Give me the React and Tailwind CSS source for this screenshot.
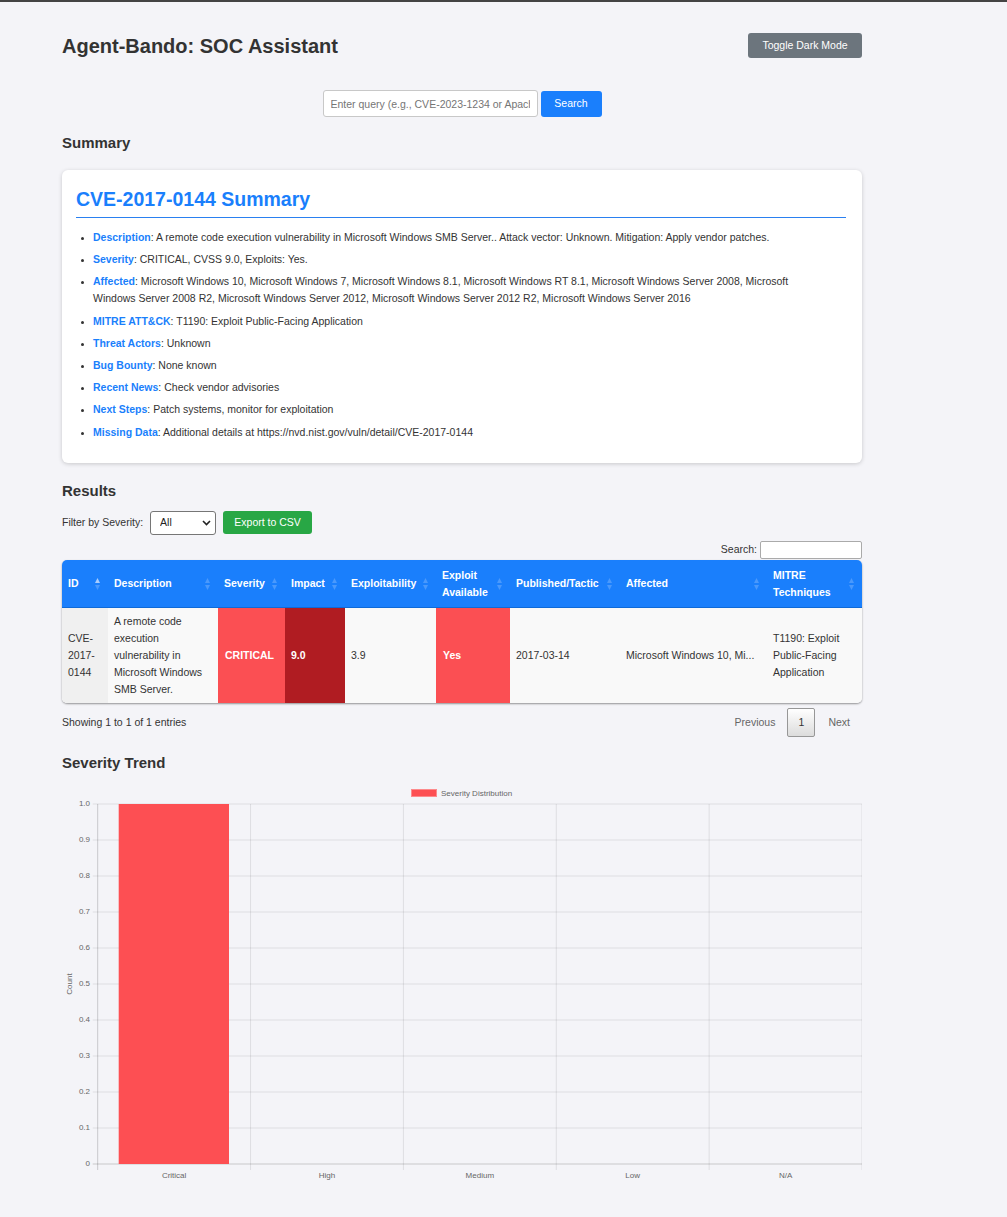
import React, { useState } from 'react';

const summaryItems = [
  { label: 'Description', text: 'A remote code execution vulnerability in Microsoft Windows SMB Server.. Attack vector: Unknown. Mitigation: Apply vendor patches.' },
  { label: 'Severity', text: 'CRITICAL, CVSS 9.0, Exploits: Yes.' },
  { label: 'Affected', text: 'Microsoft Windows 10, Microsoft Windows 7, Microsoft Windows 8.1, Microsoft Windows RT 8.1, Microsoft Windows Server 2008, Microsoft Windows Server 2008 R2, Microsoft Windows Server 2012, Microsoft Windows Server 2012 R2, Microsoft Windows Server 2016' },
  { label: 'MITRE ATT&CK', text: 'T1190: Exploit Public-Facing Application' },
  { label: 'Threat Actors', text: 'Unknown' },
  { label: 'Bug Bounty', text: 'None known' },
  { label: 'Recent News', text: 'Check vendor advisories' },
  { label: 'Next Steps', text: 'Patch systems, monitor for exploitation' },
  { label: 'Missing Data', text: 'Additional details at https://nvd.nist.gov/vuln/detail/CVE-2017-0144' },
];

const columns = [
  { title: 'ID', width: 46, active: true },
  { title: 'Description', width: 110 },
  { title: 'Severity', width: 67 },
  { title: 'Impact', width: 60 },
  { title: 'Exploitability', width: 91 },
  { title: 'Exploit Available', width: 74 },
  { title: 'Published/Tactic', width: 110 },
  { title: 'Affected', width: 147 },
  { title: 'MITRE Techniques', width: 95 },
];

const SortIcon = ({ active }) => (
  <svg width="5" height="12" viewBox="0 0 5 12" className="shrink-0">
    <path d="M2.5 0L5 5H0Z" fill={active ? '#a9cdfd' : '#4a99fc'} />
    <path d="M0 7H5L2.5 12Z" fill="#4a99fc" />
  </svg>
);

// Bar chart of severity counts
const SeverityChart = () => {
  const plotL = 35.7;
  const plotR = 800;
  const plotT = 32;
  const plotB = 392;
  const cats = ['Critical', 'High', 'Medium', 'Low', 'N/A'];
  const values = [1, 0, 0, 0, 0];
  const catW = (plotR - plotL) / cats.length;
  const ticks = [1.0, 0.9, 0.8, 0.7, 0.6, 0.5, 0.4, 0.3, 0.2, 0.1, 0];

  return (
    <svg width="800" height="425" className="block">
      {/* legend */}
      <rect x="349.5" y="17.5" width="25" height="7" fill="#fd4f53" stroke="#fd8a8c" strokeWidth="1" />
      <text x="379" y="21.5" fontSize="8" fill="#666" dominantBaseline="middle">
        Severity Distribution
      </text>

      {/* horizontal grid */}
      {ticks.map((t, i) => {
        const y = plotT + ((plotB - plotT) / 10) * i;
        const isAxis = i === ticks.length - 1;
        return (
          <g key={t}>
            <line
              x1={plotL - 5}
              x2={plotR}
              y1={y}
              y2={y}
              stroke={isAxis ? 'rgba(0,0,0,0.18)' : 'rgba(0,0,0,0.09)'}
              strokeWidth="1"
            />
            <text x="28" y={y} fontSize="8" fill="#666" textAnchor="end" dominantBaseline="middle">
              {t === 0 ? '0' : t.toFixed(1)}
            </text>
          </g>
        );
      })}

      {/* vertical grid */}
      {[0, 1, 2, 3, 4, 5].map((k) => {
        const x = plotL + catW * k;
        return (
          <line
            key={k}
            x1={x}
            x2={x}
            y1={plotT}
            y2={plotB + 6}
            stroke={k === 0 ? 'rgba(0,0,0,0.18)' : 'rgba(0,0,0,0.09)'}
            strokeWidth="1"
          />
        );
      })}

      {/* bars */}
      {values.map((v, i) =>
        v > 0 ? (
          <rect
            key={cats[i]}
            x={plotL + catW * i + 21}
            y={plotB - (plotB - plotT) * v}
            width={110.3}
            height={(plotB - plotT) * v}
            fill="#fd4f53"
          />
        ) : null
      )}

      {/* x labels */}
      {cats.map((c, i) => (
        <text
          key={c}
          x={plotL + catW * i + catW / 2}
          y="404"
          fontSize="8"
          fill="#666"
          textAnchor="middle"
          dominantBaseline="middle"
        >
          {c}
        </text>
      ))}

      {/* y title */}
      <text
        x="7.5"
        y="212"
        fontSize="8"
        fill="#666"
        textAnchor="middle"
        dominantBaseline="middle"
        transform="rotate(-90 7.5 212)"
      >
        Count
      </text>
    </svg>
  );
};

const App = () => {
  const [query, setQuery] = useState('');
  const [severity, setSeverity] = useState('All');

  return (
    <div className="min-h-screen border-t-2 border-[#444] bg-[#f4f4f8] font-['Liberation_Sans',Arial,sans-serif] text-[#333]">
      <div className="ml-[62px] w-[800px] pb-[20px] pt-[31px]">
        {/* Header */}
        <div className="flex h-[25px] items-start justify-between">
          <h1 className="mt-[1px] text-[20px] font-bold leading-[25px] text-[#333]">Agent-Bando: SOC Assistant</h1>
          <button className="h-[25px] w-[114px] rounded-[3px] bg-[#6c757d] text-[10.5px] text-white">
            Toggle Dark Mode
          </button>
        </div>

        {/* Search */}
        <div className="mt-[32px] flex h-[27px] items-center justify-center gap-[3px]">
          <input
            value={query}
            onChange={(e) => setQuery(e.target.value)}
            placeholder="Enter query (e.g., CVE-2023-1234 or Apache)"
            className="h-[27px] w-[215px] rounded-[3px] border border-[#c8c8c8] bg-white px-[7px] text-[10.5px] text-[#333] outline-none placeholder:text-[#757575]"
          />
          <button className="h-[26px] w-[61px] rounded-[3px] bg-[#1a7ffc] text-[10.5px] text-white">Search</button>
        </div>

        {/* Summary */}
        <h2 className="mt-[17px] text-[15px] font-bold leading-[18px]">Summary</h2>
        <div className="mt-[18px] rounded-[6px] bg-white pb-[22px] pl-[14px] pr-[16px] pt-[17px] shadow-[0_1px_4px_rgba(0,0,0,0.18)]">
          <h3 className="pb-[6px] text-[19.5px] font-bold leading-[24px] text-[#1a7ffc]">CVE-2017-0144 Summary</h3>
          <div className="h-[1px] bg-[#2a80f0]" />
          <ul className="mt-[11px] list-disc pl-[17px] pr-[20px] text-[10.5px] leading-[17px] marker:text-[9px] marker:text-[#333]">
            {summaryItems.map((item, i) => (
              <li key={item.label} className={i === summaryItems.length - 1 ? '' : 'mb-[5.2px]'}>
                <span className="font-bold text-[#1a7ffc]">{item.label}</span>: {item.text}
              </li>
            ))}
          </ul>
        </div>

        {/* Results */}
        <h2 className="mt-[19px] text-[15px] font-bold leading-[18px]">Results</h2>
        <div className="mt-[11px] flex h-[24px] items-center text-[10.5px]">
          <span>Filter by Severity:</span>
          <div className="relative ml-[7px]">
            <select
              value={severity}
              onChange={(e) => setSeverity(e.target.value)}
              className="h-[24px] w-[66px] appearance-none rounded-[3px] border border-[#767676] bg-white pl-[9px] text-[10.5px] text-[#222] outline-none"
            >
              <option>All</option>
              <option>Critical</option>
              <option>High</option>
              <option>Medium</option>
              <option>Low</option>
            </select>
            <svg width="9" height="6" viewBox="0 0 9 6" className="pointer-events-none absolute right-[5px] top-[9px]">
              <path d="M1 1L4.5 4.5L8 1" fill="none" stroke="#222" strokeWidth="1.6" />
            </svg>
          </div>
          <button className="ml-[7px] h-[23px] w-[89px] rounded-[3px] bg-[#28a745] text-[10.5px] text-white">
            Export to CSV
          </button>
        </div>

        <div className="mt-[6.7px] flex h-[18px] items-center justify-end text-[10.5px]">
          <span>Search:</span>
          <input className="ml-[3px] h-[18px] w-[102px] rounded-[2px] border border-[#aaa] bg-white outline-none" />
        </div>

        {/* Table */}
        <div className="mt-[1px] overflow-hidden rounded-[5px] shadow-[0_1px_2px_rgba(0,0,0,0.4)]">
          <table className="w-full table-fixed border-separate border-spacing-0 text-[10.5px] leading-[17px]">
            <colgroup>
              {columns.map((c) => (
                <col key={c.title} style={{ width: c.width }} />
              ))}
            </colgroup>
            <thead>
              <tr>
                {columns.map((c) => (
                  <th
                    key={c.title}
                    className="h-[48px] border-b border-[#0e6ad8] bg-[#1a7ffc] pl-[6px] pr-[8px] text-left align-middle font-bold text-white"
                  >
                    <div className="flex items-center justify-between gap-[4px]">
                      <span>{c.title}</span>
                      <SortIcon active={c.active} />
                    </div>
                  </th>
                ))}
              </tr>
            </thead>
            <tbody>
              <tr className="bg-[#f9f9f9]">
                <td className="h-[95px] bg-[#f0f0f0] px-[6px] align-middle">CVE-2017-0144</td>
                <td className="px-[6px] align-middle">A remote code execution vulnerability in Microsoft Windows SMB Server.</td>
                <td className="bg-[#fb4f53] px-[7px] align-middle font-bold text-white">CRITICAL</td>
                <td className="bg-[#b01c22] px-[6px] align-middle font-bold text-white">9.0</td>
                <td className="px-[6px] align-middle">3.9</td>
                <td className="bg-[#fb4f53] px-[7px] align-middle font-bold text-white">Yes</td>
                <td className="px-[6px] align-middle">2017-03-14</td>
                <td className="whitespace-nowrap px-[6px] align-middle">Microsoft Windows 10, Mi...</td>
                <td className="px-[6px] align-middle">T1190: Exploit Public-Facing Application</td>
              </tr>
            </tbody>
          </table>
        </div>

        {/* Table footer */}
        <div className="mt-[5.3px] flex h-[28.4px] items-center justify-between text-[10.5px]">
          <span>Showing 1 to 1 of 1 entries</span>
          <div className="flex items-center">
            <span className="px-[12px] text-[#666]">Previous</span>
            <span className="flex h-[28.4px] w-[28px] items-center justify-center rounded-[2px] border border-[#979797] bg-gradient-to-b from-white to-[#dcdcdc] text-[#333]">
              1
            </span>
            <span className="pl-[13px] pr-[12px] text-[#666]">Next</span>
          </div>
        </div>

        {/* Chart */}
        <h2 className="mt-[17.6px] text-[15px] font-bold leading-[18px]">Severity Trend</h2>
        <SeverityChart />
      </div>
    </div>
  );
};

export default App;
